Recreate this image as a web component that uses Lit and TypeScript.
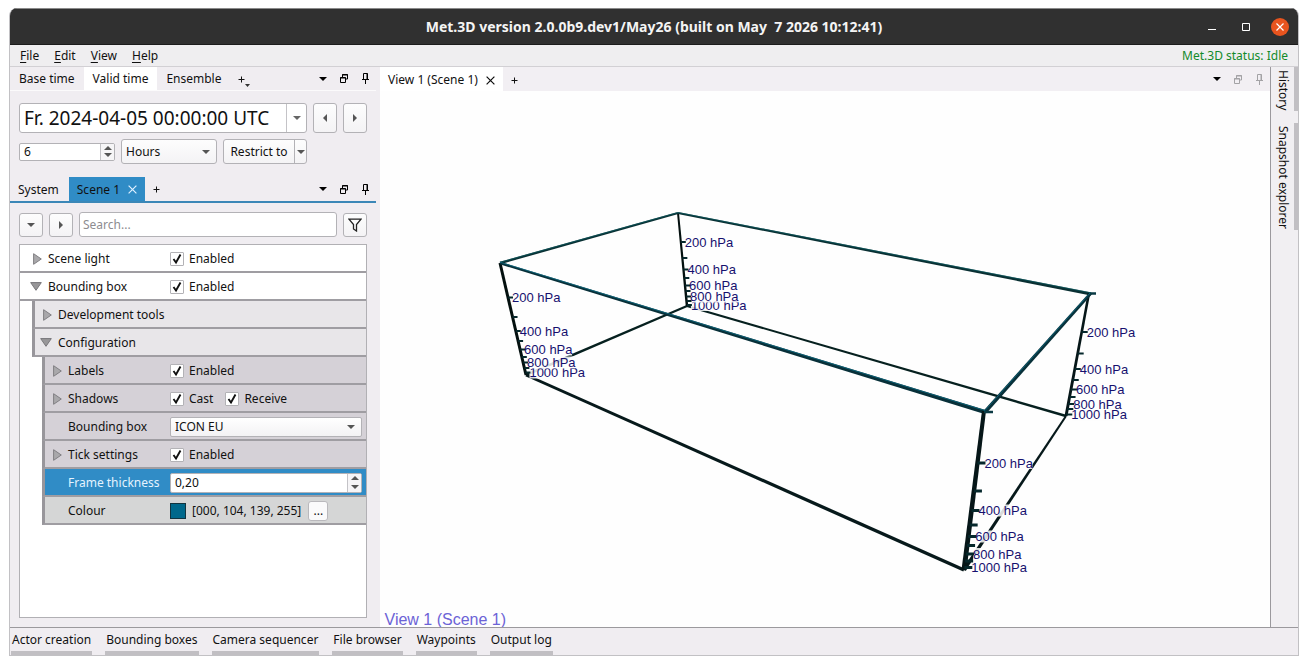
import { LitElement, html, svg, css, nothing } from "lit";
import { customElement, property } from "lit/decorators.js";
import { classMap } from "lit/directives/class-map.js";

type Check = { text: string };
type Row = {
  label: string;
  level: 0 | 1 | 2;
  state?: "open" | "closed";
  selected?: boolean;
  muted?: boolean;
  checks?: Check[];
  editor?: "combo" | "spin" | "colour";
};

const ROWS: Row[] = [
  { label: "Scene light", level: 0, state: "closed", checks: [{ text: "Enabled" }] },
  { label: "Bounding box", level: 0, state: "open", checks: [{ text: "Enabled" }] },
  { label: "Development tools", level: 1, state: "closed" },
  { label: "Configuration", level: 1, state: "open" },
  { label: "Labels", level: 2, state: "closed", checks: [{ text: "Enabled" }] },
  { label: "Shadows", level: 2, state: "closed", checks: [{ text: "Cast" }, { text: "Receive" }] },
  { label: "Bounding box", level: 2, editor: "combo" },
  { label: "Tick settings", level: 2, state: "closed", checks: [{ text: "Enabled" }] },
  { label: "Frame thickness", level: 2, selected: true, editor: "spin" },
  { label: "Colour", level: 2, muted: true, editor: "colour" },
];

/* Edges of the box: x1, y1, x2, y2, start width, end width, colour. */
const EDGES: [number, number, number, number, number, number, string][] = [
  [687, 306, 1066, 416, 2, 2.5, "#06201f"],
  [687, 306, 526, 375, 2, 2.5, "#06201f"],
  [678, 213, 687, 306, 2, 2.5, "#04100f"],
  [500, 263, 678, 213, 2.5, 2, "#0a3033"],
  [678, 213, 1091, 294, 2, 3, "#0a3033"],
  [1066, 416, 964, 570, 2, 3.5, "#07191b"],
  [1089, 293, 1066, 416, 2.5, 3, "#061618"],
  [500, 263, 526, 375, 3, 3, "#04100f"],
  [526, 375, 964, 570, 3, 3.5, "#07191b"],
  [500, 263, 985, 412, 2.5, 4, "#083039"],
  [1091, 293, 985, 412, 3, 4, "#083039"],
  [984, 411, 964, 570, 4, 5, "#061618"],
];

type Axis = {
  top: [number, number];
  bottom: [number, number];
  majors: number[];
  minors: number[];
  tick: number;
  weight: number;
};

const AXES: Axis[] = [
  { top: [678, 213], bottom: [687, 306], majors: [242, 269.5, 285.5, 296.5, 305], minors: [258, 278, 291, 301], tick: 5, weight: 2 },
  { top: [500, 263], bottom: [526, 375], majors: [297.5, 331, 349.5, 362.5, 372.5], minors: [317, 341, 357, 368], tick: 5, weight: 2 },
  { top: [1089, 293], bottom: [1066, 416], majors: [332, 369, 389.5, 404, 414.5], minors: [353.5, 380, 397, 409], tick: 6, weight: 2 },
  { top: [984, 411], bottom: [964, 570], majors: [463, 510.5, 536.5, 554, 567.5], minors: [491, 525, 545.5, 561], tick: 8, weight: 3 },
];

const LEVELS = ["200 hPa", "400 hPa", "600 hPa", "800 hPa", "1000 hPa"];

const caretDown = svg`<svg class="caret" width="8" height="4" viewBox="0 0 8 4"><path d="M0 0h8L4 4z" fill="currentColor"/></svg>`;
const caretUp = svg`<svg class="caret" width="8" height="4" viewBox="0 0 8 4"><path d="M0 4h8L4 0z" fill="currentColor"/></svg>`;
const caretRight = svg`<svg class="caret" width="4" height="8" viewBox="0 0 4 8"><path d="M0 0v8l4-4z" fill="currentColor"/></svg>`;
const caretLeft = svg`<svg class="caret" width="4" height="8" viewBox="0 0 4 8"><path d="M4 0v8L0 4z" fill="currentColor"/></svg>`;
const plus = svg`<svg class="caret" width="7" height="7" viewBox="0 0 7 7"><path d="M.5 3.5h6M3.5 .5v6" stroke="#111" stroke-width="1"/></svg>`;
const cross = svg`<svg class="caret" width="9" height="9" viewBox="0 0 9 9"><path d="M.6 .6l7.8 7.8M8.4 .6L.6 8.4" stroke="currentColor" stroke-width="1.2"/></svg>`;

@customElement("dock-tools")
class DockTools extends LitElement {
  @property({ type: Boolean, reflect: true }) disabled = false;

  static styles = css`
    :host { display: flex; align-items: center; gap: 5px; margin-left: auto; }
    button { all: unset; width: 16px; height: 16px; display: flex; align-items: center; justify-content: center; color: #000; }
    :host([disabled]) .dim { color: #a3a2a5; }
    svg { display: block; }
  `;

  render() {
    return html`
      <button aria-label="List tabs"><svg width="8" height="4" viewBox="0 0 8 4"><path d="M0 0h8L4 4z" fill="currentColor"/></svg></button>
      <button class="dim" aria-label="Detach"><svg width="8" height="9" viewBox="0 0 8 9"><path d="M2.5 3V.5h5v4.500H6M2 1h6M.5 3.500h5v5h-5zM0 4h6" fill="none" stroke="currentColor"/></svg></button>
      <button class="dim" aria-label="Pin"><svg width="7" height="11" viewBox="0 0 7 11"><path d="M1.500 6V.5h4V6M5 .5V6M0 6.500h7M3.500 6.500V11" fill="none" stroke="currentColor"/></svg></button>
    `;
  }
}

@customElement("spin-box")
class SpinBox extends LitElement {
  @property() value = "";
  @property() label = "";

  static styles = css`
    :host { display: flex; height: 18px; border: 1px solid #b3b2b6; border-radius: 2px; background: #fff; overflow: hidden; }
    input { all: unset; flex: 1; min-width: 0; padding-left: 4px; font: 12px/18px "Noto Sans", sans-serif; color: #111; }
    .steps { width: 13px; display: flex; flex-direction: column; padding: 1px 0; gap: 1px; border-left: 1px solid #c4c3c7; background: #f6f5f7; }
    button { all: unset; flex: 1; display: flex; align-items: center; justify-content: center; color: #555; }
    svg { display: block; }
  `;

  render() {
    return html`
      <input type="text" .value=${this.value} aria-label=${this.label} />
      <div class="steps">
        <button aria-label="Increase">${caretUp}</button>
        <button aria-label="Decrease">${caretDown}</button>
      </div>
    `;
  }
}

@customElement("property-tree")
class PropertyTree extends LitElement {
  static styles = css`
    :host { display: block; border: 1px solid #b1b0b4; background: #fff; overflow: hidden; }
    .row {
      --inset: 0px;
      box-sizing: border-box;
      height: 28px;
      margin-left: var(--inset);
      display: grid;
      grid-template-columns: calc(150px - var(--inset)) minmax(0, 1fr);
      align-items: center;
      border-bottom: 2px solid #9f9da2;
      padding: 1px 4px 0 0;
      font: 12px/18px "Noto Sans", sans-serif;
      color: #111;
    }
    .level-1, .level-2 { border-left: 3px solid #98969b; }
    .level-1 { --inset: 12px; background: #e8e6e9; }
    .level-2 { --inset: 22px; background: #d5d1d7; }
    .level-1, .level-2 { grid-template-columns: calc(147px - var(--inset)) minmax(0, 1fr); }
    .muted { background: #d5d6d6; }
    .selected { background: #308cc6; }
    .selected .name { color: #e4f3ff; }
    .name { display: flex; align-items: center; white-space: nowrap; padding-left: 10px; }
    .level-1 .name, .level-2 .name { padding-left: 5px; }
    .arrow { width: 18px; flex: none; }
    .arrow svg { display: block; }
    .arrow.closed svg { margin-left: 3px; }
    .value { display: flex; align-items: center; gap: 12px; }
    label { display: flex; align-items: center; gap: 5px; }
    input[type="checkbox"] {
      appearance: none; margin: 0; width: 14px; height: 14px; border: 1px solid #b3b2b6; border-radius: 1px;
      background: #fff url("data:image/svg+xml,%3Csvg xmlns='http://www.w3.org/2000/svg' viewBox='0 0 12 12'%3E%3Cpath d='M2.500 6L5 9.500 9.500 1.500' fill='none' stroke='%23111' stroke-width='1.900'/%3E%3C/svg%3E") center / 12px no-repeat;
    }
    select {
      appearance: none; box-sizing: border-box; width: 100%; height: 20px; margin: 0; padding: 0 20px 0 4px;
      border: 1px solid #b3b2b6; border-radius: 2px; color: #111; font: 12px/18px "Noto Sans", sans-serif;
      background: url("data:image/svg+xml,%3Csvg xmlns='http://www.w3.org/2000/svg' width='8' height='4'%3E%3Cpath d='M0 0h8L4 4z' fill='%23555'/%3E%3C/svg%3E") right 6px center no-repeat, linear-gradient(#fff, #f3f2f4);
    }
    spin-box { flex: 1; }
    .colour { gap: 6px; }
    .swatch { box-sizing: border-box; width: 16px; height: 16px; background: #00688b; border: 1px solid #12343f; }
    .more {
      box-sizing: border-box; width: 20px; height: 20px; margin: 0 0 0 1px; padding: 0; border: 1px solid #b9b8bc;
      border-radius: 3px; background: #fafafb; color: #111; font: 12px/16px "Noto Sans", sans-serif;
    }
  `;

  private editor(row: Row) {
    if (row.editor === "combo")
      return html`<div class="value"><select aria-label=${row.label}><option>ICON EU</option></select></div>`;
    if (row.editor === "spin")
      return html`<div class="value"><spin-box value="0,20" label=${row.label}></spin-box></div>`;
    if (row.editor === "colour")
      return html`<div class="value colour"><span class="swatch"></span><span>[000, 104, 139, 255]</span><button class="more" aria-label="Choose colour">...</button></div>`;
    return html`<div class="value">
      ${(row.checks ?? []).map((c) => html`<label><input type="checkbox" checked />${c.text}</label>`)}
    </div>`;
  }

  private arrow(state?: string) {
    if (state === "open")
      return svg`<svg width="12" height="9" viewBox="0 0 12 9"><path d="M.7 .6h10.600L6 8.300z" fill="#989799" stroke="#77767a"/></svg>`;
    if (state === "closed")
      return svg`<svg width="9" height="12" viewBox="0 0 9 12"><path d="M.6 .7v10.600L8.300 6z" fill="#a9a8ab" stroke="#807f83"/></svg>`;
    return nothing;
  }

  render() {
    return ROWS.map(
      (row) => html`<div
        class=${classMap({ row: true, [`level-${row.level}`]: true, selected: !!row.selected, muted: !!row.muted })}
      >
        <div class="name"><span class="arrow ${row.state ?? ""}">${this.arrow(row.state)}</span>${row.label}</div>
        ${this.editor(row)}
      </div>`
    );
  }
}

@customElement("scene-view")
class SceneView extends LitElement {
  static styles = css`
    :host { display: block; background: #fefefe; overflow: hidden; }
    svg { display: block; width: 100%; height: 100%; }
    .hpa { font: 13px "Liberation Sans", Arial, sans-serif; fill: #16106e; }
    .title { font: 16px "Liberation Sans", Arial, sans-serif; fill: #6c63d6; }
  `;

  private edge([x1, y1, x2, y2, w1, w2, colour]: (typeof EDGES)[number]) {
    const len = Math.hypot(x2 - x1, y2 - y1);
    const nx = -(y2 - y1) / len / 2;
    const ny = (x2 - x1) / len / 2;
    const points = [
      [x1 + nx * w1, y1 + ny * w1],
      [x2 + nx * w2, y2 + ny * w2],
      [x2 - nx * w2, y2 - ny * w2],
      [x1 - nx * w1, y1 - ny * w1],
    ];
    return svg`<polygon points=${points.map((p) => p.join(",")).join(" ")} fill=${colour}/>`;
  }

  private axis(a: Axis) {
    const at = (y: number) => a.top[0] + ((y - a.top[1]) / (a.bottom[1] - a.top[1])) * (a.bottom[0] - a.top[0]);
    const tick = (y: number) =>
      svg`<path d="M${at(y)} ${y}h${a.tick}" stroke="#06282c" stroke-width=${a.weight}/>`;
    const labels = LEVELS.map((text, i) => ({ text, y: a.majors[i], x: at(a.majors[i]) + a.tick - 1 })).reverse();
    return svg`
      ${labels.map(
        (l) => svg`<rect x=${l.x} y=${l.y - 6} width="48" height="12" fill="#fefefe" opacity="0.85"/>
          <text class="hpa" x=${l.x} y=${l.y + 4.5}>${l.text}</text>`
      )}
      ${[...a.majors, ...a.minors].map(tick)}`;
  }

  render() {
    return html`<svg viewBox="380 91 890 536" role="img" aria-label="Bounding box scene">
      ${EDGES.map((e) => this.edge(e))}
      <path d="M1089 293.500h7M984 412h9" stroke="#0b3a44" stroke-width="2.500" />
      <path d="M500 262.300L678 212.500M678 212.500L1091 292.800" stroke="#0a6068" stroke-width="1" fill="none" opacity=".6" />
      <path d="M500 262.200L985 410.500L1090 293" stroke="#0c6a82" stroke-width="1" fill="none" opacity=".8" />
      ${AXES.map((a) => this.axis(a))}
      <text class="title" x="384.500" y="625">View 1 (Scene 1)</text>
    </svg>`;
  }
}

@customElement("app-root")
class AppRoot extends LitElement {
  static styles = css`
    :host {
      display: block; box-sizing: border-box; height: 100vh; padding: 8px 9px 9px;
      background: #fff; color: #111; font: 12px/18px "Noto Sans", sans-serif;
    }
    * { box-sizing: border-box; }
    button { all: unset; box-sizing: border-box; white-space: nowrap; }
    .caret { display: block; flex: none; }
    .window {
      height: 100%; display: flex; flex-direction: column; background: #f0edf1;
      border: 1px solid #c2c1c4; border-top: 0; border-radius: 8px 8px 0 0; overflow: hidden;
    }
    .titlebar {
      height: 37px; flex: none; display: grid; grid-template-columns: 1fr auto 1fr; align-items: center;
      background: #303030; border-top: 1px solid #8a8a8a; border-bottom: 1px solid #1c1c1c; color: #f4f4f4;
    }
    .titlebar h1 { grid-column: 2; margin: 0; font: bold 14px/20px "Noto Sans", sans-serif; white-space: pre; }
    .controls { display: flex; justify-content: flex-end; align-items: center; gap: 16px; padding-right: 9px; }
    .controls button { width: 18px; height: 18px; display: flex; align-items: center; justify-content: center; }
    .controls .close { background: #e8541e; border-radius: 50%; }
    .menubar {
      height: 22px; flex: none; display: flex; align-items: center; gap: 15px; padding: 1px 10px 0;
      border-bottom: 1px solid #d2d0d4; background: #efeef0;
    }
    .menubar u { text-underline-offset: 2px; }
    .status { margin-left: auto; color: #128a2a; }
    .body { flex: 1; min-height: 0; display: flex; }
    .dock { width: 370px; flex: none; display: flex; flex-direction: column; padding-right: 4px; }
    .tabs { height: 24px; flex: none; display: flex; align-items: stretch; padding-right: 3px; }
    .tab { display: flex; align-items: center; padding: 1px 8px 0; gap: 8px; }
    .tab.current { background: #fff; }
    .time-tabs { border-bottom: 1px solid #fbfafb; }
    .time-tabs .tab { padding: 0 9px; }
    .menu-plus { display: flex; align-items: flex-end; padding: 0 8px 3px; }
    .menu-plus .caret:first-child { margin-bottom: 4px; }
    .scene-tabs { height: 26px; border-bottom: 2px solid #3b87b7; }
    .scene-tabs .tab.current { margin-left: 2px; background: #308cc6; color: #111; }
    .scene-tabs .tab.current .caret { color: #dcefff; }
    .time { flex: none; padding: 12px 9px 13px; display: flex; flex-direction: column; gap: 6px; }
    .line { display: flex; align-items: center; gap: 6px; }
    .box { border: 1px solid #b3b2b6; border-radius: 3px; background: linear-gradient(#fdfdfd, #f4f3f5); }
    .icon { width: 24px; height: 24px; display: flex; align-items: center; justify-content: center; color: #555; }
    .icon.tall { height: 30px; }
    .date { flex: 1; display: flex; height: 30px; background: #fff; overflow: hidden; }
    .date input { all: unset; flex: 1; min-width: 0; padding-left: 4px; font: 19px/28px "Noto Sans", sans-serif; }
    .date button { width: 20px; display: flex; align-items: center; justify-content: center; border-left: 1px solid #c4c3c7; color: #666; }
    .step { width: 96px; }
    .unit {
      appearance: none; width: 96px; height: 25px; padding: 0 4px; color: #111; font: 12px/18px "Noto Sans", sans-serif;
      border: 1px solid #b3b2b6; border-radius: 3px;
      background: url("data:image/svg+xml,%3Csvg xmlns='http://www.w3.org/2000/svg' width='8' height='4'%3E%3Cpath d='M0 0h8L4 4z' fill='%23555'/%3E%3C/svg%3E") right 6px center no-repeat, linear-gradient(#fdfdfd, #f4f3f5);
    }
    .split { display: flex; width: 84px; height: 25px; color: #555; }
    .split .main { flex: 1; color: #111; text-align: center; line-height: 23px; }
    .split .more { width: 12px; display: flex; align-items: center; justify-content: center; border-left: 1px solid #b3b2b6; }
    .search { flex: none; padding: 9px 9px 7px; }
    .search input {
      flex: 1; min-width: 0; height: 25px; margin: 0; padding: 0 3px; background: #fff; outline: 0;
      font: 12px/18px "Noto Sans", sans-serif; border: 1px solid #b3b2b6; border-radius: 3px;
    }
    .search input::placeholder { color: #8d8c90; opacity: 1; }
    .search .filter { color: #222; }
    property-tree { flex: 1; min-height: 0; margin: 0 9px; }
    .dock-foot { height: 9px; flex: none; }
    .view { flex: 1; min-width: 0; display: flex; flex-direction: column; border-right: 1px solid #9b999d; }
    .view .tab { padding: 2px 8px 0; }
    .view .tabs { background: #f2eff3; padding-right: 3px; }
    scene-view { flex: 1; min-height: 0; }
    .side { width: 27px; flex: none; display: flex; flex-direction: column; gap: 12px; background: #f1eff2; }
    .side button { writing-mode: vertical-rl; width: 27px; padding: 3px 0 1px; line-height: 22px; border-right: 4px solid #c1bfc3; }
    .foot {
      height: 28px; flex: none; display: flex; align-items: stretch; gap: 13px; padding-left: 1px; border-top: 1px solid #9b999d;
    }
    .foot button { padding: 0 1px; line-height: 19px; border-bottom: 4px solid #c1bfc3; }
  `;

  render() {
    return html`
      <div class="window">
        <header class="titlebar">
          <h1>Met.3D version 2.0.0b9.dev1/May26 (built on May  7 2026 10:12:41)</h1>
          <div class="controls">
            <button aria-label="Minimize"><svg width="8" height="8"><path d="M0 6.500h8" stroke="#fff" /></svg></button>
            <button aria-label="Maximize"><svg width="8" height="8"><path d="M.5 .5h7v7h-7z" fill="none" stroke="#fff" /></svg></button>
            <button class="close" aria-label="Close"><svg width="8" height="8"><path d="M.5 .5l7 7M7.500 .5l-7 7" stroke="#fff" stroke-width="1.200" /></svg></button>
          </div>
        </header>
        <nav class="menubar">
          <button><u>F</u>ile</button>
          <button><u>E</u>dit</button>
          <button><u>V</u>iew</button>
          <button><u>H</u>elp</button>
          <span class="status">Met.3D status: Idle</span>
        </nav>
        <main class="body">
          <section class="dock">
            <div class="tabs time-tabs">
              <button class="tab">Base time</button>
              <button class="tab current">Valid time</button>
              <button class="tab">Ensemble</button>
              <button class="menu-plus" aria-label="Add">${plus}<svg class="caret" width="5" height="3"><path d="M0 0h5L2.500 3z" fill="#333" /></svg></button>
              <dock-tools></dock-tools>
            </div>
            <div class="time">
              <div class="line">
                <div class="date box">
                  <input type="text" aria-label="Valid time" .value=${"Fr. 2024-04-05 00:00:00 UTC"} />
                  <button aria-label="Calendar">${caretDown}</button>
                </div>
                <button class="box icon tall" aria-label="Back">${caretLeft}</button>
                <button class="box icon tall" aria-label="Forward">${caretRight}</button>
              </div>
              <div class="line">
                <spin-box class="step" value="6" label="Time step"></spin-box>
                <select class="unit" aria-label="Time unit"><option>Hours</option></select>
                <div class="split box">
                  <button class="main">Restrict to</button>
                  <button class="more" aria-label="Restrict options">${caretDown}</button>
                </div>
              </div>
            </div>
            <div class="tabs scene-tabs">
              <button class="tab">System</button>
              <button class="tab current">Scene 1 ${cross}</button>
              <button class="tab" aria-label="Add scene">${plus}</button>
              <dock-tools></dock-tools>
            </div>
            <div class="line search">
              <button class="box icon" aria-label="Expand all">${caretDown}</button>
              <button class="box icon" aria-label="Collapse all">${caretRight}</button>
              <input type="text" placeholder="Search..." aria-label="Search" />
              <button class="box icon filter" aria-label="Filter">
                <svg width="14" height="14" viewBox="0 0 14 14"><path d="M1 1.200h12L8.500 6.500V13L5.500 11V6.500z" fill="none" stroke="currentColor" stroke-width="1.300" /></svg>
              </button>
            </div>
            <property-tree></property-tree>
            <div class="dock-foot"></div>
          </section>
          <section class="view">
            <div class="tabs">
              <button class="tab current">View 1 (Scene 1) ${cross}</button>
              <button class="tab" aria-label="Add view">${plus}</button>
              <dock-tools disabled></dock-tools>
            </div>
            <scene-view></scene-view>
          </section>
          <aside class="side">
            <button>History</button>
            <button>Snapshot explorer</button>
          </aside>
        </main>
        <footer class="foot">
          ${["Actor creation", "Bounding boxes", "Camera sequencer", "File browser", "Waypoints", "Output log"].map(
            (t) => html`<button>${t}</button>`
          )}
        </footer>
      </div>
    `;
  }
}
